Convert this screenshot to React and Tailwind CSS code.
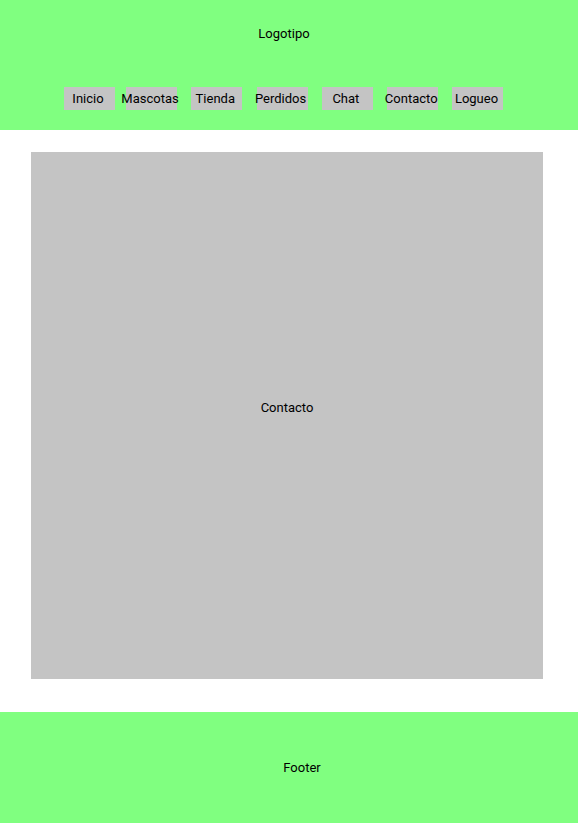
const navItems = [
  { label: 'Inicio', offset: 'ml-[64px]' },
  { label: 'Mascotas', offset: 'ml-[11px]' },
  { label: 'Tienda', offset: 'ml-[14.3px]' },
  { label: 'Perdidos', offset: 'ml-[14.3px]' },
  { label: 'Chat', offset: 'ml-[14.3px]' },
  { label: 'Contacto', offset: 'ml-[14.3px]' },
  { label: 'Logueo', offset: 'ml-[14.3px]' },
]

export default function App() {
  return (
    <div className="min-h-[823px] bg-white font-['Roboto',sans-serif] text-[13px] text-black">
      <header className="h-[130px] bg-[#80ff80]">
        <div className="flex h-[68px] items-center justify-center pr-[10px]">Logotipo</div>
        <nav className="mt-[19px] flex">
          {navItems.map((item) => (
            <a
              key={item.label}
              href="#"
              className={`${item.offset} flex h-[23px] w-[51px] shrink-0 items-center justify-center whitespace-nowrap bg-[#c4c4c4] pt-[1px] pr-[3px]`}
            >
              {item.label}
            </a>
          ))}
        </nav>
      </header>

      <main className="pt-[22px] pb-[33px]">
        <section className="ml-[31px] flex h-[527px] w-[512px] items-center justify-center bg-[#c4c4c4] pb-[15px]">
          Contacto
        </section>
      </main>

      <footer className="flex h-[111px] items-center justify-center bg-[#80ff80] pl-[26px]">
        Footer
      </footer>
    </div>
  )
}
